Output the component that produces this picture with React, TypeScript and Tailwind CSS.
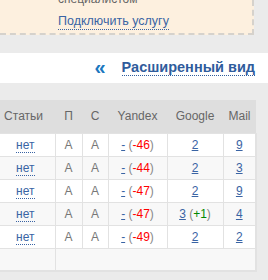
import React from 'react';

type Row = { y: string; g: string; gDelta?: string; m: string };

const rows: Row[] = [
  { y: '-46', g: '2', m: '9' },
  { y: '-44', g: '2', m: '3' },
  { y: '-47', g: '2', m: '9' },
  { y: '-47', g: '3', gDelta: '+1', m: '4' },
  { y: '-49', g: '2', m: '2' },
];

export default function App() {
  return (
    <div
      className="w-[268px] h-[280px] overflow-hidden bg-[#ebebeb] text-[12px] leading-none"
      style={{ fontFamily: '"Liberation Sans", Arial, sans-serif' }}
    >
      {/* service promo */}
      <div className="w-[254px] h-[35px] bg-[#fdf0df] border-r-2 border-b-2 border-dashed border-[#d6d2cc] pl-[58px] overflow-hidden">
        <div className="-mt-[7px] text-[#666] h-[10px]">специалистом</div>
        <div className="mt-[12px]">
          <a className="text-[#3a64a4] text-[12.5px] border-b border-dotted border-[#3a64a4] pb-[1px]">Подключить услугу</a>
        </div>
      </div>

      <div className="h-[18px]" />

      <div className="h-[30px] bg-white flex items-center justify-end pr-[13px] gap-[16px]">
        <span className="text-[#1b78bf] text-[20px] font-bold leading-none -mt-[3px]">«</span>
        <a className="text-[#2f5c9c] text-[14.5px] font-bold border-b border-dotted border-[#2f5c9c] pb-[1px]">
          Расширенный вид
        </a>
      </div>

      <div className="h-[17px]" />

      <table className="w-[256px] border-collapse table-fixed">
        <colgroup>
          <col className="w-[55px]" />
          <col className="w-[27px]" />
          <col className="w-[26px]" />
          <col className="w-[59px]" />
          <col className="w-[56px]" />
          <col className="w-[33px]" />
        </colgroup>
        <thead>
          <tr className="bg-[#dedede] text-[#666] h-[33px]">
            <th className="font-normal text-right pr-[12px]">Статьи</th>
            <th className="font-normal">П</th>
            <th className="font-normal">С</th>
            <th className="font-normal">Yandex</th>
            <th className="font-normal">Google</th>
            <th className="font-normal">Mail</th>
          </tr>
        </thead>
        <tbody>
          {rows.map((r, i) => (
            <tr key={i} className={`h-[23px] ${i % 2 === 1 ? 'bg-[#f8f8f8]' : 'bg-white'}`}>
              <td className="border border-[#e2e2e2] border-l-0 text-right pr-[20px]">
                <a className="text-[#3a64a4] border-b border-dotted border-[#3a64a4]">нет</a>
              </td>
              <td className="border border-[#e2e2e2] text-center text-[#777]">A</td>
              <td className="border border-[#e2e2e2] text-center text-[#777]">A</td>
              <td className="border border-[#e2e2e2] text-center text-[#888]">
                <a className="text-[#3a64a4] underline">-</a> (<span className="text-[#f00]">{r.y}</span>)
              </td>
              <td className="border border-[#e2e2e2] text-center text-[#888]">
                <a className="text-[#3a64a4] underline">{r.g}</a>
                {r.gDelta && (
                  <>
                    {' '}(<span className="text-[#080]">{r.gDelta}</span>)
                  </>
                )}
              </td>
              <td className="border border-[#e2e2e2] border-r-2 text-center">
                <a className="text-[#3a64a4] underline">{r.m}</a>
              </td>
            </tr>
          ))}
          <tr className="h-[23px] bg-[#f8f8f8]">
            <td className="border border-[#e2e2e2] border-l-0 border-b-2" />
            <td colSpan={5} className="border border-[#e2e2e2] border-r-2 border-b-2" />
          </tr>
        </tbody>
      </table>
    </div>
  );
}
